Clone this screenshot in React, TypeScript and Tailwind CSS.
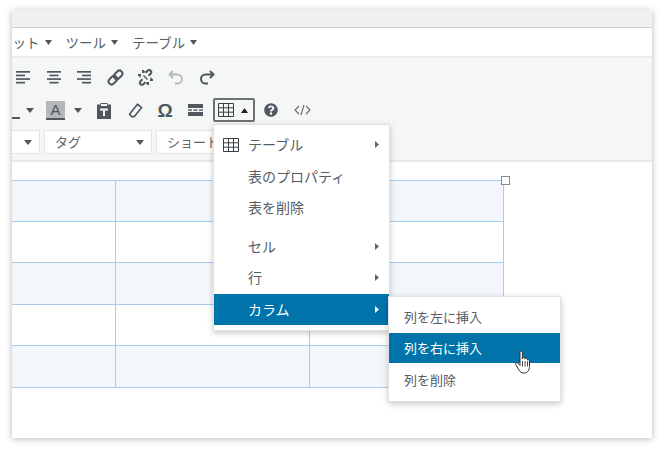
import React from "react";
import { FaQuestionCircle } from "react-icons/fa";

const Caret = ({ className = "", w = 7, h = 5 }: { className?: string; w?: number; h?: number }) => (
  <svg width={w} height={h} viewBox="0 0 9 6" preserveAspectRatio="none" className={`shrink-0 ${className}`}>
    <path d="M0 0h9L4.500 6z" fill="currentColor" />
  </svg>
);

const Right = ({ white = false }: { white?: boolean }) => (
  <svg width="4" height="7" viewBox="0 0 4 7" className={white ? "text-white" : "text-[#666]"}>
    <path d="M0 0l4 3.500L0 7z" fill="currentColor" />
  </svg>
);

const Align = ({ kind }: { kind: "l" | "c" | "r" }) => {
  const w = [14, 9, 14, 9];
  const x = (width: number) => (kind === "l" ? 0 : kind === "c" ? (14 - width) / 2 : 14 - width);
  return (
    <svg width="14" height="13" viewBox="0 0 14 13" className="text-[#50575e]">
      {w.map((width, i) => (
        <rect key={i} x={x(width)} y={i * 3.6} width={width} height="1.7" fill="currentColor" />
      ))}
    </svg>
  );
};

const TableIcon = () => (
  <svg width="16" height="14" viewBox="0 0 16 14" className="text-[#3a3f44]">
    <path d="M.5.5h15v13H.5zM.5 4.800h15M.5 9.200h15M5.500.5v13M10.500.5v13" fill="none" stroke="currentColor" />
  </svg>
);

const Btn = ({ children, w = "w-[30.6px]" }: { children: React.ReactNode; w?: string }) => (
  <div className={`${w} h-6 flex items-center justify-center shrink-0`}>{children}</div>
);

const Select = ({ w, label }: { w: string; label: string }) => (
  <div className={`${w} h-6 bg-white border border-[#e4e6e6] flex items-center justify-between pl-2.5 pr-[7px] shrink-0`}>
    <span className="text-[13px] text-[#666] whitespace-nowrap">{label}</span>
    <Caret className="text-[#555]" w={8} />
  </div>
);

const MenuItem = ({ label, arrow = false, active = false, icon = false }: { label: string; arrow?: boolean; active?: boolean; icon?: boolean }) => (
  <div className={`h-[31.5px] flex items-center pr-2.5 ${active ? "bg-[#0073aa] text-white" : "text-[#555d66]"}`}>
    <div className="w-[34px] pl-[9px] flex items-center shrink-0">{icon && <TableIcon />}</div>
    <span className="text-[14px] flex-1 whitespace-nowrap">{label}</span>
    {arrow && <Right white={active} />}
  </div>
);

const SubItem = ({ label, active = false }: { label: string; active?: boolean }) => (
  <div className={`h-[30px] flex items-center pl-[15px] text-[13px] ${active ? "bg-[#0073aa] text-white" : "text-[#555d66]"}`}>{label}</div>
);

const rows = [41, 41, 42, 41, 42];

export default function App() {
  return (
    <div className="w-[664px] h-[451px] bg-white overflow-hidden pt-2.5 pl-3" style={{ fontFamily: '"Noto Sans CJK JP", "Noto Sans", sans-serif' }}>
      <div className="relative w-[640px] h-[428px] bg-white rounded-t-[2px] shadow-[0_1px_7px_rgba(0,0,0,0.28)]">
        <div className="h-[18px] bg-[#eff0ef] border-b border-[#cccccc] rounded-t-[2px]" />
        <div className="h-[30px] bg-white border-b-2 border-[#eaebeb] overflow-hidden flex items-center text-[13.5px] text-[#555d66]">
          <div className="flex items-center gap-[5px] -ml-[13px] whitespace-nowrap">
            <span>マット</span>
            <Caret className="text-[#555]" />
          </div>
          <div className="flex items-center gap-[5px] ml-[14px] whitespace-nowrap">
            <span>ツール</span>
            <Caret className="text-[#555]" />
          </div>
          <div className="flex items-center gap-[5px] ml-[14px] whitespace-nowrap">
            <span>テーブル</span>
            <Caret className="text-[#555]" />
          </div>
        </div>
        <div className="h-[104px] bg-[#f5f6f6] border-b-2 border-[#e7e8e8] overflow-hidden">
          <div className="flex items-center -ml-[4px] pt-[7px] text-[#50575e]">
            <Btn><Align kind="l" /></Btn>
            <Btn><Align kind="c" /></Btn>
            <Btn><Align kind="r" /></Btn>
            <Btn>
              <svg width="17" height="17" viewBox="0 0 17 17" fill="none" stroke="#50575e" strokeWidth="2">
                <g transform="rotate(-45 8.500 8.500)">
                  <rect x="0" y="5.500" width="9.500" height="6" rx="3" />
                  <rect x="7.500" y="5.500" width="9.500" height="6" rx="3" />
                </g>
              </svg>
            </Btn>
            <Btn>
              <svg width="17" height="17" viewBox="0 0 17 17" fill="none" stroke="#50575e" strokeWidth="2">
                <path d="M5.500 10.200L3.400 12.300a2.100 2.100 0 0 0 1.300 3.500 2.100 2.100 0 0 0 1.600-.6l2-2M11.500 6.800l2.100-2.100a2.100 2.100 0 0 0-3-3l-2 2M6 1v3M1 6h3M11 16v-3M16 11h-3" />
                <path d="M3.500 8.500L2 6.500M8.500 3.500L6.500 2M8.500 13.500l2 1.500M13.500 8.500l1.500 2" strokeWidth="1.200" />
                <path d="M6.500 6.500l4 4" strokeWidth="1.500" />
              </svg>
            </Btn>
            <Btn>
              <svg width="16" height="15" viewBox="0 0 16 15" fill="none" stroke="#b4b9be" strokeWidth="1.800">
                <path d="M5 1L1.500 4.500 5 8M2 4.500h7.500a4.500 4.500 0 0 1 0 9H7" />
              </svg>
            </Btn>
            <Btn>
              <svg width="16" height="15" viewBox="0 0 16 15" fill="none" stroke="#50575e" strokeWidth="2">
                <path d="M11 1l3.500 3.500L11 8M14 4.500H6.500a4.500 4.500 0 0 0 0 9H9" />
              </svg>
            </Btn>
          </div>
          <div className="flex items-center mt-[9px] h-6 text-[#50575e]">
            <div className="w-[11px] h-[2px] bg-[#50575e] self-end mb-[3px] -ml-[3px] shrink-0" />
            <Caret className="ml-[6px] text-[#555]" w={8} />
            <div className="ml-[12px] w-[19px] h-[19px] bg-[#b5b7b8] border-b-2 border-[#50575e] flex items-center justify-center text-[15px] font-medium leading-none shrink-0" style={{ fontFamily: '"Liberation Sans", sans-serif' }}>A</div>
            <Caret className="ml-[9px] text-[#555]" w={8} />
            <Btn w="w-[18px] ml-[13px]">
              <svg width="16" height="17" viewBox="0 0 16 17">
                <path d="M1 2.500h3.500V1h7v1.500H15V17H1z" fill="#50575e" />
                <rect x="5" y="2" width="6" height="2" fill="#f5f6f6" />
                <path d="M4 6.500h8v2H9v5.500H7V8.500H4z" fill="#f5f6f6" />
              </svg>
            </Btn>
            <Btn w="w-[18px] ml-[13px]">
              <svg width="15" height="15" viewBox="0 0 15 15" fill="none" stroke="#50575e" strokeWidth="1.600" strokeLinejoin="round">
                <path d="M9.500 1.200l4.200 3.400-7.400 9H3.800L1.500 11.200z" />
              </svg>
            </Btn>
            <Btn w="w-[18px] ml-[12px]">
              <span className="text-[19px] font-bold leading-none" style={{ fontFamily: '"Liberation Sans", sans-serif' }}>Ω</span>
            </Btn>
            <Btn w="w-[16px] ml-[13px]">
              <svg width="15" height="14" viewBox="0 0 15 14" fill="#50575e">
                <rect x="0" y="1" width="15" height="4" />
                <rect x="0" y="6.400" width="4" height="1.400" />
                <rect x="5.500" y="6.400" width="4" height="1.400" />
                <rect x="11" y="6.400" width="4" height="1.400" />
                <rect x="0" y="9" width="15" height="4" />
              </svg>
            </Btn>
            <div className="ml-[10px] w-[42px] h-[24px] border-2 border-[#6d7175] rounded-[2px] bg-[#f5f6f6] flex items-center pl-[3px] gap-[7px] shrink-0">
              <TableIcon />
              <Caret className="text-[#222] rotate-180" />
            </div>
            <Btn w="w-[16px] ml-[8px]"><FaQuestionCircle size={14} /></Btn>
            <Btn w="w-[18px] ml-[14px]">
              <svg width="17" height="12" viewBox="0 0 17 12" fill="none" stroke="#666" strokeWidth="1.100">
                <path d="M5 2L1 6l4 4M12 2l4 4-4 4M10 1L7 11" />
              </svg>
            </Btn>
          </div>
          <div className="flex items-center mt-[8px] gap-[4px] -ml-[20px]">
            <Select w="w-[48px]" label="" />
            <Select w="w-[108px]" label="タグ" />
            <Select w="w-[108px]" label="ショートコード" />
          </div>
        </div>
        <div className="relative pt-[18px]">
          <div className="relative w-[492px]">
            <div className="border-t border-[#a5cbed] w-[492px]">
              {rows.map((h, r) => (
                <div key={r} className={`flex border-b border-[#a5cbed] ${r % 2 === 0 ? "bg-[#f3f7fc]" : "bg-white"}`} style={{ height: h }}>
                  <div className="w-[104px] border-r border-[#a5cbed]" />
                  <div className="w-[194px] border-r border-[#a5cbed]" />
                  <div className="w-[194px] border-r border-[#a5cbed]" />
                </div>
              ))}
            </div>
            <div className="absolute -right-[6px] -top-[4px] w-[9px] h-[9px] bg-white border border-[#888]" />
          </div>
        </div>

        <div className="absolute left-[201px] top-[114px] w-[177px] h-[207px] bg-white border border-[#e2e2e2] shadow-[0_2px_6px_rgba(0,0,0,0.22)] pt-[4px]">
          <MenuItem label="テーブル" arrow icon />
          <MenuItem label="表のプロパティ" />
          <MenuItem label="表を削除" />
          <div className="h-[7px]" />
          <MenuItem label="セル" arrow />
          <MenuItem label="行" arrow />
          <MenuItem label="カラム" arrow active />
        </div>

        <div className="absolute left-[376px] top-[286px] w-[173px] h-[106px] bg-white border border-[#e2e2e2] shadow-[0_2px_6px_rgba(0,0,0,0.22)] pt-[5px]">
          <SubItem label="列を左に挿入" />
          <div className="h-px" />
          <SubItem label="列を右に挿入" active />
          <div className="h-[2px]" />
          <SubItem label="列を削除" />
        </div>

        <svg className="absolute left-[502px] top-[340px]" width="19" height="25" viewBox="0 0 18 25">
          <path d="M5.500 2.200c0-1.600 2.400-1.600 2.400 0V9l.2-1c.4-1.200 2.200-1 2.300.2v1l.3-.6c.5-1 2.100-.7 2.200.5v1c.6-.8 2.100-.4 2.100.8v5.500c0 3.600-2 6.600-5.500 6.600-2.600 0-4-1-5.200-3.200L1.200 14.500c-.8-1.400 1-2.600 2.200-1.400l2.100 2.300z" fill="#fff" stroke="#333" strokeWidth="1" strokeLinejoin="round" />
          <path d="M8 11v5.500M10.600 11v5.500M13 11.500v5" stroke="#333" strokeWidth="0.900" />
        </svg>
      </div>
    </div>
  );
}
